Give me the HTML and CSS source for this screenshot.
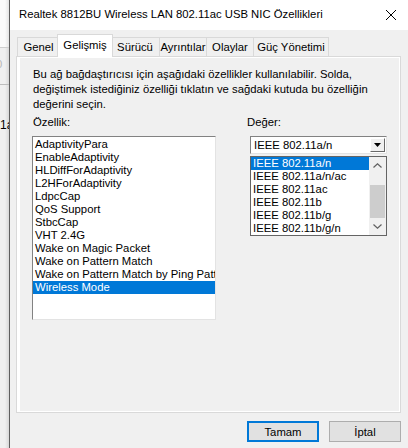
FILE: index.html
```html
<!DOCTYPE html>
<html lang="tr">
<head>
    <meta charset="UTF-8">
    <title>Realtek 8812BU Wireless LAN 802.11ac USB NIC Özellikleri</title>
    <link rel="stylesheet" href="styles.css">
</head>
<body>
<div class="desk">
    <!-- arkadaki pencereden görünen parça -->
    <div class="behind">
        <div class="behind-top"></div>
        <span class="behind-zero">0</span>
        <div class="behind-line"></div>
        <span class="behind-text">1a</span>
    </div>

    <div class="dialog">
        <div class="titlebar">
            <span class="title">Realtek 8812BU Wireless LAN 802.11ac USB NIC Özellikleri</span>
            <svg class="close" width="12" height="12" viewBox="0 0 12 12">
                <path d="M1 1 L11 11 M11 1 L1 11" stroke="#000" stroke-width="1" fill="none"/>
            </svg>
        </div>

        <div class="tabs">
            <div class="tab t-genel">Genel</div>
            <div class="tab active">Gelişmiş</div>
            <div class="tab t-surucu">Sürücü</div>
            <div class="tab t-ayrinti">Ayrıntılar</div>
            <div class="tab t-olay">Olaylar</div>
            <div class="tab t-guc">Güç Yönetimi</div>
        </div>

        <div class="panel">
            <div class="page">
                <p class="info">Bu ağ bağdaştırıcısı için aşağıdaki özellikler kullanılabilir. Solda,
                    değiştimek istediğiniz özelliği tıklatın ve sağdaki kutuda bu özelliğin
                    değerini seçin.</p>

                <div class="columns">
                    <div class="col-left">
                        <div class="label">Özellik:</div>
                        <ul class="listbox">
                            <li>AdaptivityPara</li>
                            <li>EnableAdaptivity</li>
                            <li>HLDiffForAdaptivity</li>
                            <li>L2HForAdaptivity</li>
                            <li>LdpcCap</li>
                            <li>QoS Support</li>
                            <li>StbcCap</li>
                            <li>VHT 2.4G</li>
                            <li>Wake on Magic Packet</li>
                            <li>Wake on Pattern Match</li>
                            <li>Wake on Pattern Match by Ping Pattern</li>
                            <li class="selected">Wireless Mode</li>
                        </ul>
                    </div>

                    <div class="col-right">
                        <div class="label">Değer:</div>
                        <div class="combo">
                            <span class="combo-value">IEEE 802.11a/n</span>
                            <span class="combo-btn">
                                <svg width="7" height="4" viewBox="0 0 7 4"><path d="M0 0 H7 L3.5 4 Z" fill="#000"/></svg>
                            </span>
                        </div>
                        <!-- açılmış liste -->
                        <div class="dropdown">
                            <ul class="drop-items">
                                <li class="selected">IEEE 802.11a/n</li>
                                <li>IEEE 802.11a/n/ac</li>
                                <li>IEEE 802.11ac</li>
                                <li>IEEE 802.11b</li>
                                <li>IEEE 802.11b/g</li>
                                <li>IEEE 802.11b/g/n</li>
                            </ul>
                            <div class="scroll">
                                <div class="arrow">
                                    <svg width="9" height="5" viewBox="0 0 9 5"><path d="M0.5 4.5 L4.5 0.8 L8.5 4.5" stroke="#606060" stroke-width="1.2" fill="none"/></svg>
                                </div>
                                <div class="track"><div class="thumb"></div></div>
                                <div class="arrow">
                                    <svg width="9" height="5" viewBox="0 0 9 5"><path d="M0.5 0.5 L4.5 4.2 L8.5 0.5" stroke="#606060" stroke-width="1.2" fill="none"/></svg>
                                </div>
                            </div>
                        </div>
                    </div>
                </div>
            </div>
        </div>

        <div class="buttons">
            <button class="btn default">Tamam</button>
            <button class="btn">İptal</button>
        </div>
    </div>
</div>
</body>
</html>
```

FILE: styles.css
```css
body {
    margin: 0;
    font-family: "Liberation Sans", Arial, sans-serif;
    font-size: 11.3px;
    color: #000;
    background: #f0f0f0;
}

.desk {
    display: flex;
    width: 408px;
    height: 448px;
    overflow: hidden;
}

/* arkadaki pencere */
.behind {
    position: relative;
    width: 9px;
    flex-shrink: 0;
    overflow: hidden;
    background: linear-gradient(to right, #f0f0f0 0, #f0f0f0 5px, #d8d8d8 9px);
}

.behind-top {
    height: 47px;
    background: linear-gradient(to right, #fbfbfb 0, #fbfbfb 5px, #e4e4e4 9px);
    border-bottom: 1px solid #cfcfcf;
}

.behind-zero {
    position: absolute;
    left: -4px;
    top: 58px;
    color: #b8b8b8;
}

.behind-line {
    position: absolute;
    left: 0;
    top: 84px;
    width: 9px;
    border-top: 1px solid #bdbdbd;
}

.behind-text {
    position: absolute;
    left: 0;
    top: 118px;
    font-size: 12px;
}

/* diyalog penceresi */
.dialog {
    flex: 1;
    background: #f0f0f0;
    border-left: 1px solid #5f5f5f;
}

.titlebar {
    height: 30px;
    background: #fff;
    display: flex;
    align-items: center;
    justify-content: space-between;
    padding: 0 11px 2px 9px;
    box-sizing: border-box;
}

.title {
    font-size: 11.3px;
}

.close {
    margin-top: 1px;
}

/* sekmeler */
.tabs {
    display: flex;
    align-items: flex-end;
    height: 22px;
    margin: 4px 0 0 7px;
    position: relative;
    z-index: 1;
}

.tab {
    height: 19px;
    line-height: 19px;
    text-align: center;
    border: 1px solid #d9d9d9;
    border-bottom: none;
    border-right: none;
    background: #f0f0f0;
    box-sizing: border-box;
}

.t-genel { width: 42px; }
.t-surucu { width: 48px; }
.t-ayrinti { width: 47px; }
.t-olay { width: 47px; }
.t-guc { width: 76px; }

.tab:last-child {
    border-right: 1px solid #d9d9d9;
}

.tab.active {
    width: 56px;
    height: 23px;
    line-height: 20px;
    margin: 0 -2px -1px -2px;
    background: #fff;
    border-right: 1px solid #d9d9d9;
    position: relative;
}

.tab.active + .tab {
    border-left: none;
}

/* sekme içeriği */
.panel {
    margin: 0 7px 0 6px;
    height: 357px;
    border: 1px solid #d9d9d9;
    background: #fff;
    padding: 1px 1px 1px 3px;
    box-sizing: border-box;
}

.page {
    height: 100%;
    background: #f0f0f0;
    padding: 9px 10px 0 13px;
    box-sizing: border-box;
}

.info {
    margin: 0;
    line-height: 15px;
}

.columns {
    display: flex;
    margin-top: 3px;
}

.label {
    line-height: 15px;
    margin-bottom: 6px;
}

.col-left {
    width: 184px;
    margin-left: -1px;
}

.col-left .label {
    padding-left: 1px;
}

.col-right {
    position: relative;
    margin-left: 34px;
    width: 137px;
}

.col-right .label {
    margin-left: -3px;
}

.listbox {
    list-style: none;
    margin: 0;
    padding: 1px 0 0;
    height: 184px;
    background: #fff;
    border: 1px solid;
    border-color: #828282 #e3e3e3 #e3e3e3 #828282;
    box-sizing: border-box;
    overflow: hidden;
}

.listbox li,
.drop-items li {
    height: 13px;
    line-height: 13px;
    padding-left: 2px;
    white-space: nowrap;
    overflow: hidden;
}

li.selected {
    background: #0078d7;
    color: #fff;
}

/* açılır kutu */
.combo {
    display: flex;
    height: 18px;
    background: #fff;
    border: 1px solid;
    border-color: #828282 #e3e3e3 #e3e3e3 #828282;
    box-sizing: border-box;
}

.combo-value {
    flex: 1;
    line-height: 16px;
    padding-left: 3px;
}

.combo-btn {
    width: 15px;
    margin: 1px;
    background: #f0f0f0;
    border: 1px solid;
    border-color: #fff #696969 #696969 #fff;
    box-sizing: border-box;
    display: flex;
    align-items: center;
    justify-content: center;
}

.dropdown {
    position: absolute;
    left: 0;
    top: 41px;
    width: 137px;
    height: 80px;
    display: flex;
    background: #fff;
    border: 1px solid #646464;
    box-sizing: border-box;
}

.drop-items {
    flex: 1;
    list-style: none;
    margin: 0;
    padding: 0;
}

.scroll {
    width: 17px;
    display: flex;
    flex-direction: column;
    background: #f0f0f0;
}

.arrow {
    height: 17px;
    display: flex;
    align-items: center;
    justify-content: center;
}

.track {
    flex: 1;
    display: flex;
    flex-direction: column;
    justify-content: flex-end;
}

.thumb {
    height: 33px;
    margin: 0 1px;
    background: #cdcdcd;
}

/* butonlar */
.buttons {
    display: flex;
    justify-content: flex-end;
    gap: 10px;
    margin: 8px 7px 0 0;
}

.btn {
    width: 72px;
    height: 21px;
    font-family: inherit;
    font-size: 11.3px;
    background: #e1e1e1;
    border: 1px solid #adadad;
    padding: 0;
}

.btn.default {
    border: 2px solid #0078d7;
}
```
